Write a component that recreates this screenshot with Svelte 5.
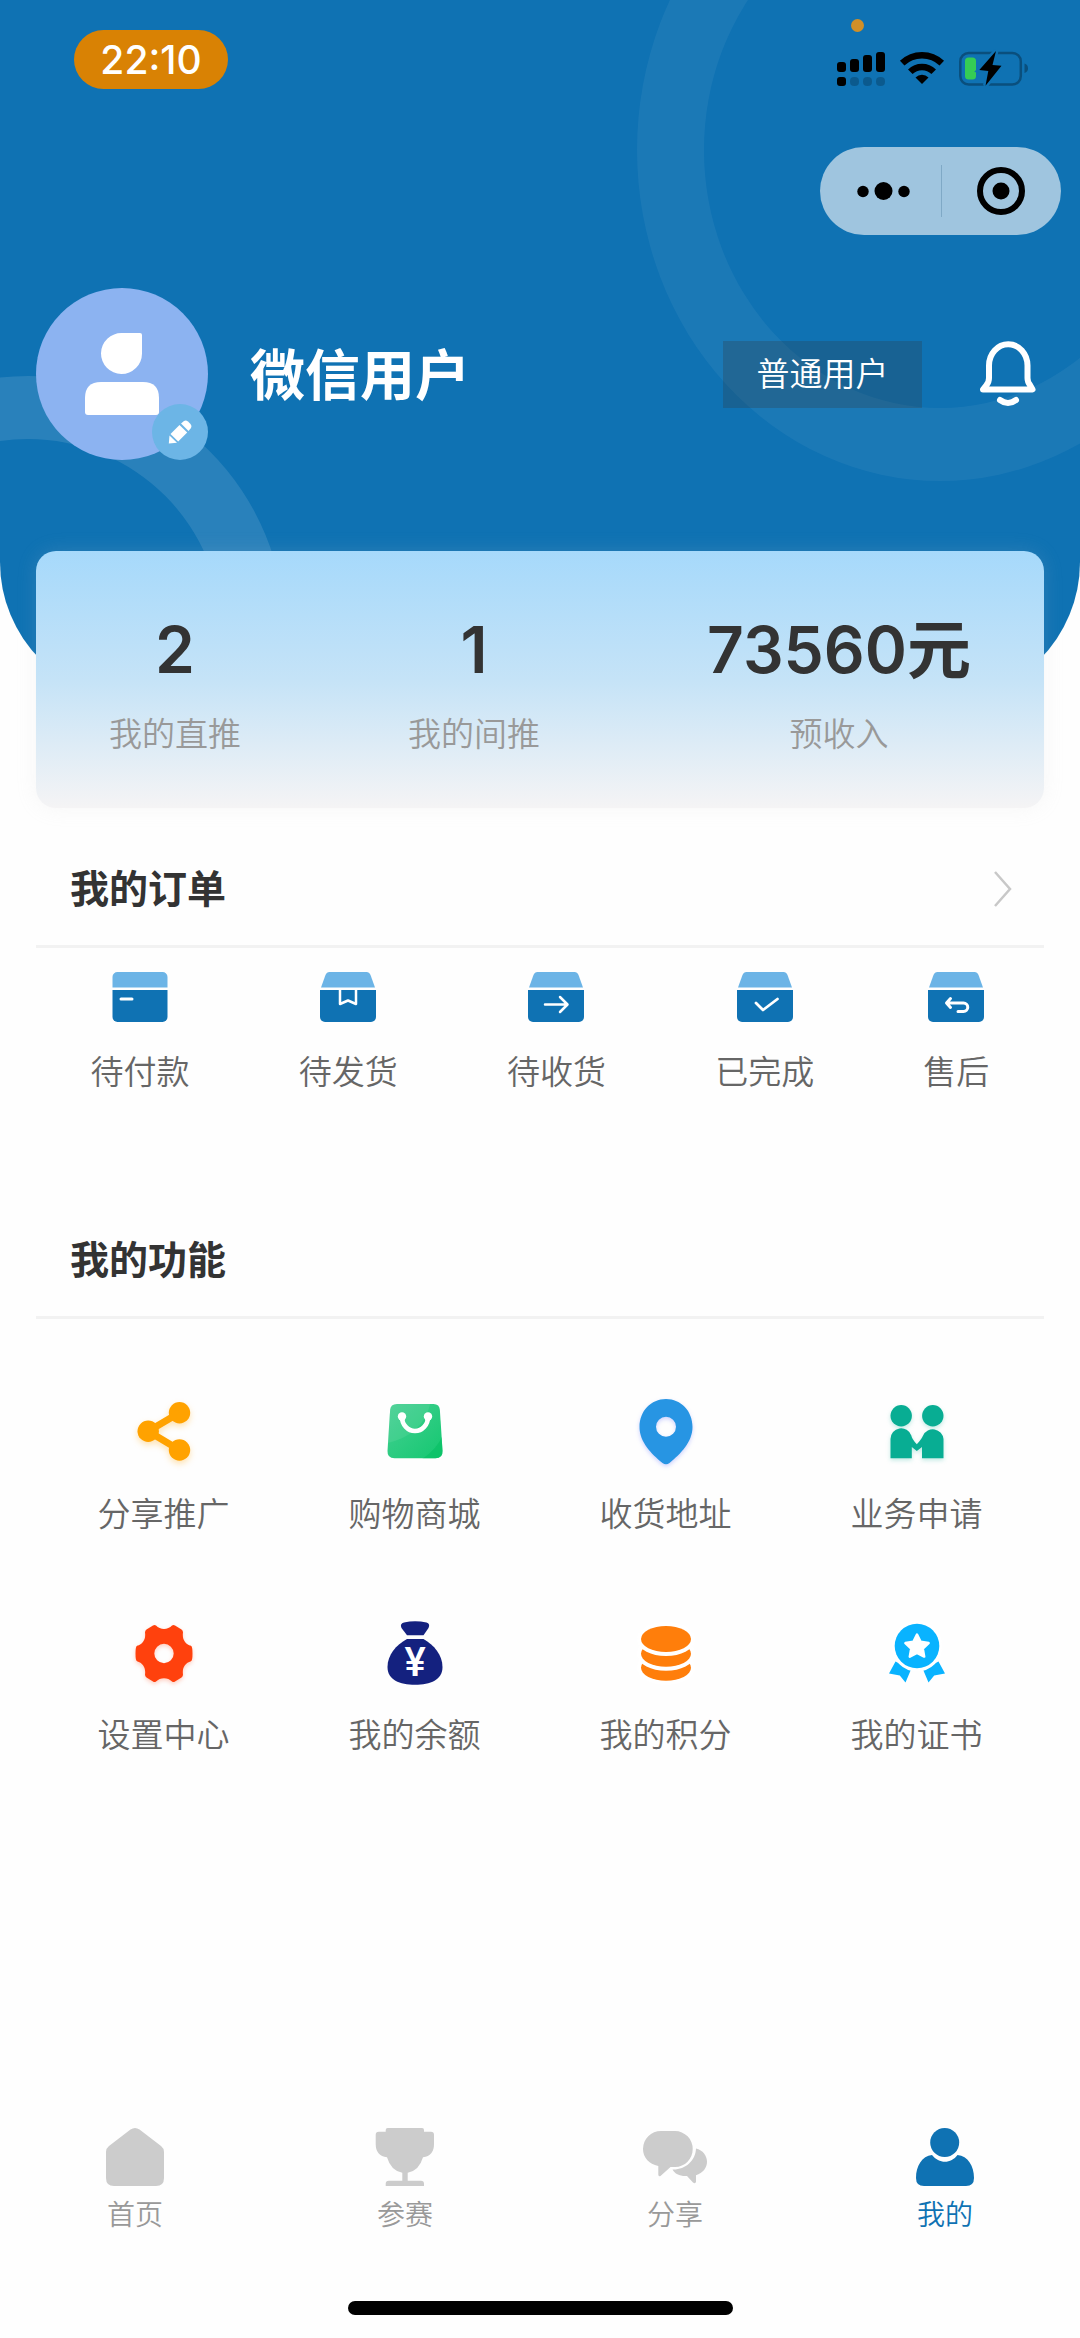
<script>
	const stats = [
		{ value: '2', label: '我的直推' },
		{ value: '1', label: '我的间推' },
		{ value: '73560元', label: '预收入' }
	];

	const orders = [
		{ type: 'pay', label: '待付款' },
		{ type: 'send', label: '待发货' },
		{ type: 'receive', label: '待收货' },
		{ type: 'done', label: '已完成' },
		{ type: 'refund', label: '售后' }
	];

	const features = [
		{ icon: 'share', label: '分享推广' },
		{ icon: 'shop', label: '购物商城' },
		{ icon: 'address', label: '收货地址' },
		{ icon: 'business', label: '业务申请' },
		{ icon: 'setting', label: '设置中心' },
		{ icon: 'balance', label: '我的余额' },
		{ icon: 'points', label: '我的积分' },
		{ icon: 'cert', label: '我的证书' }
	];

	const tabs = [
		{ icon: 'home', label: '首页' },
		{ icon: 'match', label: '参赛' },
		{ icon: 'chat', label: '分享' },
		{ icon: 'mine', label: '我的' }
	];

	let activeTab = $state('mine');
</script>

{#snippet orderIcon(type)}
	<svg class="order-icon" viewBox="0 0 56 50" aria-hidden="true">
		{#if type === 'pay'}
			<path d="M.5 15.5V5a5 5 0 0 1 5-5h45a5 5 0 0 1 5 5v10.5z" fill="#6cb4e6" />
			<path d="M.5 18h55v27a5 5 0 0 1-5 5h-45a5 5 0 0 1-5-5z" fill="#0f72b3" />
			<path d="M9 27h11" class="line" stroke-width="3" />
		{:else}
			<path d="M1 15.500 5.500 3Q6.700 0 9.500 0h37q2.800 0 4 3L55 15.500z" fill="#6cb4e6" />
			<path d="M0 18h56v27a5 5 0 0 1-5 5H5a5 5 0 0 1-5-5z" fill="#0f72b3" />
			{#if type === 'send'}
				<path d="M20 18v14l8-3.500 8 3.500V18" class="line" stroke-width="2.500" stroke-linejoin="miter" />
			{:else if type === 'receive'}
				<path d="M17 32.500h22M32 25l7.500 7.500L32 40" class="line" stroke-width="2.500" />
			{:else if type === 'done'}
				<path d="M19 31l7 7 14.500-11" class="line" stroke-width="2.800" />
			{:else}
				<path d="M22.500 26.500 18.500 31l4 4.500M19 31h16.500a4.200 4.200 0 0 1 0 8.500H30" class="line" stroke-width="3" />
			{/if}
		{/if}
	</svg>
{/snippet}

{#snippet featureIcon(icon)}
	<svg class="feature-icon {icon}" viewBox="0 0 64 64" aria-hidden="true">
		{#if icon === 'share'}
			<g fill="#ffa200">
				<circle cx="47.500" cy="12.700" r="10.700" />
				<circle cx="16.200" cy="31.300" r="10.700" />
				<circle cx="47.500" cy="50" r="10.700" />
				<path d="M47.500 12.700 16.200 31.300l31.300 18.700" fill="none" stroke="#ffa200" stroke-width="7" />
			</g>
		{:else if icon === 'shop'}
			<defs>
				<linearGradient id="bag" x1="0" y1="0" x2="1" y2="1">
					<stop offset="0" stop-color="#48d095" />
					<stop offset="1" stop-color="#10c76d" />
				</linearGradient>
				<clipPath id="bag-clip">
					<path d="M14 4h36.500q6 0 6.400 6l2.600 41q.3 7.300-7 7.300h-41q-7.300 0-7-7.300l2.600-41q.4-6 6.900-6z" />
				</clipPath>
			</defs>
			<g clip-path="url(#bag-clip)">
				<path d="M0 0h64v64H0z" fill="url(#bag)" />
				<path d="M64 20Q60 48 34 62h30z" fill="#06c062" opacity=".6" />
				<path d="M0 0h48Q42 36 0 44z" fill="#fff" opacity=".08" />
			</g>
			<path d="M19 17a13 14 0 0 0 26 0" fill="none" stroke="#fff" stroke-width="4.600" />
			<circle cx="19" cy="16.500" r="4.200" fill="#fff" />
			<circle cx="45" cy="16.500" r="4.200" fill="#fff" />
		{:else if icon === 'address'}
			<path
				d="M32-1C17-1 5.500 11 5.500 27c0 15 12 27 23 36q3.500 2.500 7 0c11-9 23-21 23-36C58.500 11 47-1 32-1zm0 17.700a10 10 0 1 1 0 20 10 10 0 0 1 0-20z"
				fill="#2795e3"
				fill-rule="evenodd"
			/>
		{:else if icon === 'business'}
			<g fill="#08ad93">
				<circle cx="16.200" cy="15.800" r="10.700" />
				<circle cx="47.800" cy="15.800" r="10.700" />
				<path d="M5.500 58.300V39a10.700 10.700 0 0 1 20.800-3.500q.5 3.500 5.500 8.700 5-5.200 6.300-8.700A10.700 10.700 0 0 1 58.500 39v19.300H37V47l-5.200 4-5-4v11.300z" />
			</g>
		{:else if icon === 'setting'}
			<path
				d="M24 4.500C28 9 36 9 40 4.500Q41.500 3.500 43 4.500L49.500 8.500Q51 9.500 51 11.500C50 18 53 23 59 24.700Q60.500 25.300 60.500 32.500T59 40.300C53 42 50 47 51 53.500Q51 55.500 49.500 56.500L43 60.500Q41.500 61.500 40 60.500C36 56 28 56 24 60.500Q22.500 61.500 21 60.500L14.500 56.500Q13 55.500 13 53.500C14 47 11 42 5 40.300Q3.500 39.700 3.500 32.500T5 24.700C11 23 14 18 13 11.500Q13 9.500 14.500 8.500L21 4.500Q22.500 3.500 24 4.500zM32 22.800a9.700 9.700 0 1 0 0 19.400 9.700 9.700 0 0 0 0-19.400z"
				fill="#ff410d"
				fill-rule="evenodd"
			/>
		{:else if icon === 'balance'}
			<path d="M24 14.300 18.500 7Q16.500 2.500 21 1.500q11-2.300 22.500 0Q47.500 2.500 45.500 7L40.500 14.300z" fill="#14217f" />
			<path d="M24 18h16.500C51 24 59.500 34 59.500 46c0 13-12 17.700-27.500 17.700S4.500 59 4.500 46C4.500 34 13 24 24 18z" fill="#14217f" />
			<text x="32" y="55" class="yen">¥</text>
		{:else if icon === 'points'}
			<g fill="#ff7e0b" stroke="#fff" stroke-width="8" paint-order="stroke">
				<ellipse cx="32" cy="46.700" rx="25" ry="13" />
				<ellipse cx="32" cy="32.700" rx="25" ry="13" />
				<ellipse cx="32" cy="18" rx="25" ry="13" />
			</g>
		{:else}
			<g fill="#09b3ff">
				<path d="m10.500 40.500 15.500 8-5.500 13-5.700-7-10.800-2z" />
				<path d="m53.500 40.500-15.500 8 5.500 13 5.700-7 10.800-2z" />
				<circle cx="32" cy="25" r="22.300" stroke="#fff" stroke-width="6" paint-order="stroke" />
				<path
					d="m32 13.500 3.600 7.300 8 1.200-5.800 5.600 1.400 8-7.200-3.800-7.200 3.800 1.400-8-5.800-5.600 8-1.200z"
					fill="#fff"
					stroke="#fff"
					stroke-width="2.500"
					stroke-linejoin="round"
				/>
			</g>
		{/if}
	</svg>
{/snippet}

{#snippet tabIcon(icon)}
	<svg class="tab-icon" viewBox="0 0 64 58" aria-hidden="true">
		{#if icon === 'home'}
			<path d="M27.500 1.500Q32-1.500 36.500 1.500L58 18q3 2.300 3 6v26q0 8-8 8H11q-8 0-8-8V24q0-3.700 3-6z" />
		{:else if icon === 'match'}
			<path
				d="M12.700 3.700V2q0-2 2-2H49q2 0 2 2v1.700h7q3 0 3 3V16q0 12-11 13.300Q46 43 34.700 44.700v8H48q3 0 3 3V58H12.700v-2.300q0-3 3-3h13.600v-8Q18 43 14 29.300 2.700 28 2.700 16V6.700q0-3 3-3z"
			/>
		{:else if icon === 'chat'}
			<path d="M18 3h14a17.700 17.700 0 0 1 17.700 18C49.700 31 42 39 32 39h-4.500l-10 9q-2.200.8-2.200-1.500V38C6 36 0 29.500 0 21A18 18 0 0 1 18 3z" />
			<path d="M53 20.500C60 22 64 28 64 33.700c0 6-4 11.300-11 13.500v6.500q-.5 2.500-3 .8L44 48c-7 .5-12-2-14.500-6.500C42 42 52.500 33 53 20.500z" />
		{:else}
			<circle cx="31.700" cy="14.500" r="14.500" />
			<path d="M19 27C9 28 3 38 3 50q0 8 8 8h42q8 0 8-8c0-12-6-22-16.500-23C38 36 26 36 19 27z" />
		{/if}
	</svg>
{/snippet}

<div class="page">
	<header class="hero">
		<svg class="rings" aria-hidden="true">
			<path
				d="M637 150a303 331 0 0 0 606 0 303 331 0 0 0-606 0zm67 0a236 258 0 0 0 472 0 236 258 0 0 0-472 0z"
				fill-rule="evenodd"
				fill-opacity=".05"
			/>
			<path
				d="M-229 633a257 257 0 0 0 514 0 257 257 0 0 0-514 0zm63 0a194 194 0 0 0 388 0 194 194 0 0 0-388 0z"
				fill-rule="evenodd"
				fill-opacity=".11"
			/>
		</svg>

		<div class="status-bar">
			<span class="time">22:10</span>
			<div class="status-icons">
				<i class="mic-dot"></i>
				<svg width="48" height="40" viewBox="0 0 48 40" aria-hidden="true">
					<rect x="0" y="13" width="9" height="10" rx="3" />
					<rect x="13" y="10" width="9" height="13" rx="3" />
					<rect x="26" y="6" width="9" height="17" rx="3" />
					<rect x="39" y="3" width="9" height="20" rx="3" />
					<rect x="0" y="28" width="9" height="9" rx="3" />
					<g opacity=".2">
						<rect x="13" y="28" width="9" height="9" rx="4" />
						<rect x="26" y="28" width="9" height="9" rx="4" />
						<rect x="39" y="28" width="9" height="9" rx="4" />
					</g>
				</svg>
				<svg width="44" height="40" viewBox="0 0 44 40" aria-hidden="true">
					<path d="M2.200 14.200a28.700 28.700 0 0 1 39.600 0M10.300 22.800a16.700 16.700 0 0 1 23.400 0" fill="none" stroke="#000" stroke-width="6.500" />
					<path d="M22 35l-6.500-6.500a9.300 9.300 0 0 1 13 0z" />
				</svg>
				<svg width="69" height="40" viewBox="0 0 69 40" aria-hidden="true">
					<rect x="1.300" y="4" width="60.500" height="31.500" rx="8.500" fill="none" stroke="#0a4f7d" stroke-width="2.500" />
					<path d="M65.500 14.500q3.500 1 3.500 4.800t-3.500 4.700z" fill="#0a4f7d" />
					<rect x="6" y="8.500" width="11" height="22" rx="3.500" fill="#35cc55" />
					<path d="M37 2 33.500 16l9 .7L26.500 36.700 29.300 22l-9-1z" stroke="#0f72b3" stroke-width="5" paint-order="stroke" />
				</svg>
			</div>
		</div>

		<div class="capsule">
			<button class="more" aria-label="更多">
				<svg width="54" height="20" viewBox="0 0 54 20">
					<circle cx="6" cy="10.500" r="5.700" />
					<circle cx="26.500" cy="10" r="9" />
					<circle cx="47" cy="10.500" r="5.700" />
				</svg>
			</button>
			<button class="close" aria-label="关闭">
				<svg width="48" height="48" viewBox="0 0 48 48">
					<circle cx="24" cy="24" r="21" fill="none" stroke="#000" stroke-width="6" />
					<circle cx="24" cy="24" r="8.500" />
				</svg>
			</button>
		</div>

		<div class="profile">
			<div class="avatar">
				<svg width="76" height="84" viewBox="0 0 76 84" aria-hidden="true">
					<path d="M38 1h18q2 0 2 2v18.500a20.500 20.500 0 1 1-20-20.500z" />
					<path d="M1 80V66q0-16 16-16h42q16 0 16 16v14q0 3-3 3H4q-3 0-3-3z" />
				</svg>
				<button class="edit" aria-label="编辑资料">
					<svg width="24" height="24" viewBox="0 0 24 24">
						<path d="M13 3.500 16 1q2-1.200 4 .5l2.500 2.500q1.700 2 .5 4l-2.500 3z" />
						<path d="m11.500 5 7.700 7.500-9 9L2.500 14z" />
						<path d="m1.500 15.500 7.500 7.300L.8 23.500z" />
					</svg>
				</button>
			</div>
			<h1>微信用户</h1>
			<span class="level">普通用户</span>
			<button class="bell" aria-label="消息">
				<svg width="56" height="66" viewBox="0 0 56 66">
					<path d="M9 37V24.500a19 21 0 0 1 38.500 0V37q0 4 2.500 7l2.500 4.500H3L6.500 44Q9 41 9 37z" />
					<path d="M20 59q8 6 16 0" />
				</svg>
			</button>
		</div>
	</header>

	<section class="stats">
		{#each stats as item}
			<div class="stat">
				<strong>{item.value}</strong>
				<span>{item.label}</span>
			</div>
		{/each}
	</section>

	<section class="panel orders">
		<a class="panel-head" href="#orders">
			<h2>我的订单</h2>
			<svg width="18" height="36" viewBox="0 0 18 36" aria-hidden="true">
				<path d="M1 1l15 17L1 35" fill="none" stroke="#c8c8c8" stroke-width="2.500" />
			</svg>
		</a>
		<div class="order-list">
			{#each orders as item}
				<a class="entry" href="#order-{item.type}">
					{@render orderIcon(item.type)}
					<span>{item.label}</span>
				</a>
			{/each}
		</div>
	</section>

	<section class="panel features">
		<div class="panel-head">
			<h2>我的功能</h2>
		</div>
		<div class="feature-list">
			{#each features as item}
				<a class="entry" href="#{item.icon}">
					{@render featureIcon(item.icon)}
					<span>{item.label}</span>
				</a>
			{/each}
		</div>
	</section>

	<nav class="tab-bar">
		{#each tabs as tab}
			<button class:active={activeTab === tab.icon} onclick={() => (activeTab = tab.icon)}>
				{@render tabIcon(tab.icon)}
				<span>{tab.label}</span>
			</button>
		{/each}
	</nav>
	<div class="home-indicator"></div>
</div>

<style>
	:global(body) {
		background: #fefefe;
	}
	.page {
		display: flex;
		flex-direction: column;
		min-height: 100vh;
		font-family: 'Noto Sans CJK SC', sans-serif;
		font-size: 33px;
		font-weight: 350;
		line-height: 48px;
		color: #666;
	}
	svg {
		display: block;
		overflow: visible;
	}
	button {
		display: flex;
		align-items: center;
		justify-content: center;
		padding: 0;
		border: 0;
		background: none;
		color: inherit;
		font: inherit;
		cursor: pointer;
	}
	a {
		color: inherit;
		text-decoration: none;
	}
	h1,
	h2 {
		margin: 0;
		font-weight: 700;
	}

	.hero {
		position: relative;
		overflow: hidden;
		padding: 30px 0 240px;
		border-radius: 0 0 138px 138px;
		background: #0f72b3;
	}
	.rings {
		position: absolute;
		top: 0;
		left: 0;
		width: 100%;
		height: 100%;
		fill: #fff;
	}
	.status-bar {
		position: relative;
		display: flex;
		align-items: flex-end;
		justify-content: space-between;
		padding: 0 52px 0 74px;
	}
	.time {
		width: 154px;
		border-radius: 30px;
		background: #d98204;
		color: #fff;
		font-family: Inter, sans-serif;
		font-size: 39px;
		font-weight: 500;
		line-height: 59px;
		text-align: center;
	}
	.status-icons {
		position: relative;
		display: flex;
		gap: 15px;
	}
	.mic-dot {
		position: absolute;
		top: -30px;
		left: 14px;
		width: 13px;
		height: 13px;
		border-radius: 50%;
		background: #d08f27;
	}
	.capsule {
		position: relative;
		display: flex;
		width: 241px;
		height: 88px;
		margin: 58px 19px 0 auto;
		border-radius: 44px;
		background: #9fc5df;
	}
	.capsule button {
		position: relative;
		width: 50%;
	}
	.more {
		padding-left: 8px;
	}
	.close::before {
		content: '';
		position: absolute;
		top: 18px;
		bottom: 18px;
		left: 0;
		width: 1px;
		background: #7fa9c6;
	}
	.profile {
		position: relative;
		display: flex;
		align-items: center;
		margin-top: 53px;
		padding: 0 44px 0 36px;
		color: #fff;
	}
	.avatar {
		position: relative;
		display: flex;
		align-items: center;
		justify-content: center;
		width: 172px;
		height: 172px;
		border-radius: 50%;
		background: #8cb3f1;
	}
	.avatar svg {
		fill: #fff;
	}
	.edit {
		position: absolute;
		right: 0;
		bottom: 0;
		width: 56px;
		height: 56px;
		border-radius: 50%;
		background: #6cb5e6;
	}
	h1 {
		flex: 1;
		margin-left: 42px;
		padding-bottom: 6px;
		font-size: 55px;
		line-height: 80px;
	}
	.level {
		width: 199px;
		padding-bottom: 4px;
		background: rgba(51, 51, 51, 0.25);
		line-height: 63px;
		text-align: center;
	}
	.bell {
		margin-left: 58px;
	}
	.bell svg {
		fill: none;
		stroke: #fff;
		stroke-width: 6;
		stroke-linecap: round;
		stroke-linejoin: round;
	}

	.stats {
		position: relative;
		display: flex;
		justify-content: space-between;
		margin: -149px 36px 0;
		padding: 59px 73px 52px;
		border-radius: 20px;
		background: linear-gradient(#a6d9fb, #c5e3f7 50%, #f5f4f5);
		box-shadow: 0 0 20px rgba(200, 200, 200, 0.15);
	}
	.stat {
		display: flex;
		flex-direction: column;
		align-items: center;
		gap: 18px;
		color: #999;
	}
	.stat strong {
		color: #333;
		font-family: Inter, 'Noto Sans CJK SC', sans-serif;
		font-size: 64px;
		font-weight: 600;
		line-height: 80px;
	}

	.panel {
		margin: 24px 36px 0;
	}
	.features {
		margin-top: 109px;
	}
	.panel-head {
		display: flex;
		align-items: center;
		justify-content: space-between;
		height: 113px;
		padding: 0 32px 0 34px;
		border-bottom: 3px solid #f2f2f2;
	}
	h2 {
		padding-bottom: 5px;
		color: #333;
		font-size: 39px;
	}
	.entry {
		display: flex;
		flex-direction: column;
		align-items: center;
		gap: 24px;
	}
	.order-list {
		display: flex;
		justify-content: space-around;
		padding-top: 24px;
	}
	.order-icon {
		width: 56px;
		height: 50px;
	}
	.line {
		fill: none;
		stroke: #fff;
		stroke-linecap: round;
		stroke-linejoin: round;
	}
	.feature-list {
		display: grid;
		grid-template-columns: repeat(4, 1fr);
		row-gap: 85px;
		padding: 81px 2px 0;
	}
	.feature-icon {
		width: 64px;
		height: 64px;
	}
	.share {
		filter: drop-shadow(0 3px 3px rgba(255, 162, 0, 0.3));
	}
	.address {
		filter: drop-shadow(0 2px 2px rgba(60, 80, 255, 0.25));
	}
	.business {
		filter: drop-shadow(0 2px 2px rgba(8, 173, 147, 0.25));
	}
	.setting {
		filter: drop-shadow(0 2px 2px rgba(255, 65, 13, 0.25));
	}
	.yen {
		fill: #fff;
		font-family: Roboto, sans-serif;
		font-size: 40px;
		font-weight: 500;
		text-anchor: middle;
	}

	.tab-bar {
		display: grid;
		grid-template-columns: repeat(4, 1fr);
		margin-top: auto;
		color: #999;
		font-size: 28px;
		line-height: 40px;
	}
	.tab-bar button {
		flex-direction: column;
		gap: 7px;
	}
	.tab-icon {
		width: 64px;
		height: 58px;
		fill: #ccc;
	}
	.active {
		color: #0f72b3;
	}
	.active .tab-icon {
		fill: #0f72b3;
	}
	.home-indicator {
		width: 385px;
		height: 14px;
		margin: 68px auto 23px;
		border-radius: 7px;
		background: #000;
	}
</style>
